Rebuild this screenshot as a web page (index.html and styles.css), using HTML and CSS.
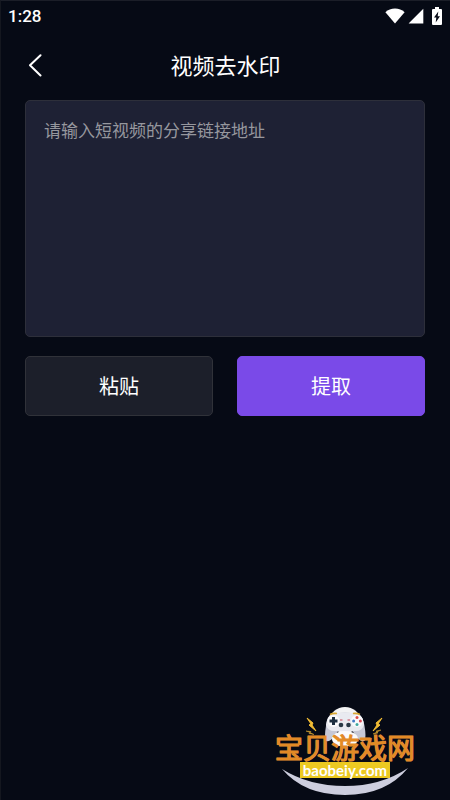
FILE: index.html
```html
<!DOCTYPE html>
<html lang="zh-CN">

<head>
    <meta charset="UTF-8">
    <meta name="viewport" content="width=device-width, initial-scale=1.0">
    <title>视频去水印</title>
    <link rel="stylesheet" href="styles.css">
</head>

<body>
    <div class="status_bar">
        <span class="time">1:28</span>
        <div class="status_icons">
            <svg width="20" height="16" viewBox="0 0 20 16">
                <path d="M10 15.600L.4 4.300C3 1.900 6.300 .6 10 .6s7 1.300 9.600 3.700z" fill="#fff" />
            </svg>
            <svg width="16" height="16" viewBox="0 0 16 16">
                <path d="M15.300 .8v14.700H.6z" fill="#fff" />
            </svg>
            <svg width="10" height="18" viewBox="0 0 10 18">
                <path d="M3 0h4v2h2q1 0 1 1v14q0 1-1 1H1q-1 0-1-1V3q0-1 1-1h2z" fill="#fff" />
                <path d="M6.300 4.500L2 10.500h2.300L3.700 15.500 8 9.300H5.700z" fill="#080b17" />
            </svg>
        </div>
    </div>

    <header class="nav">
        <button type="button" class="back" aria-label="返回">
            <svg width="16" height="24" viewBox="0 0 16 24">
                <path d="M13.500 1.200L3 11.200l10.500 10.300" fill="none" stroke="#fff" stroke-width="2" stroke-linecap="round" stroke-linejoin="round" />
            </svg>
        </button>
        <h1>视频去水印</h1>
    </header>

    <main class="content">
        <textarea class="link_input" aria-label="分享链接" placeholder="请输入短视频的分享链接地址"></textarea>
        <div class="btns">
            <button type="button" class="btn">粘贴</button>
            <button type="button" class="btn btn_main">提取</button>
        </div>
    </main>

    <div class="mark">
        <svg class="mark_pad" width="80" height="40" viewBox="0 0 80 40">
            <!-- head -->
            <ellipse cx="40" cy="14" rx="15" ry="13" fill="#f3f3f4" />
            <!-- gamepad -->
            <path d="M27 8q13-3 26 0 5 2 6.500 12 2 11 0 15-4 1-8-4l-4-6H33l-4 6q-4 5-8 4-2-4 0-15Q22.500 10 27 8z" fill="#c6c8d6" />
            <path d="M27 8q13-3 26 0 5 2 6 11-2 6-8 6H29q-6 0-8-6 1-9 6-11z" fill="#e9eaf0" />
            <ellipse cx="40" cy="33" rx="13" ry="8" fill="#fbfbfb" />
            <circle cx="28.500" cy="15" r="6" fill="#fafafc" />
            <circle cx="52" cy="15" r="6" fill="#fafafc" />
            <path d="M25 8.500q3-1.500 7-1M48 7.500q4-.5 7 1" fill="none" stroke="#d9a832" stroke-width="1.500" />
            <path d="M28.500 11v8M24.500 15h8" stroke="#1d2f40" stroke-width="3" />
            <circle cx="52" cy="11.600" r="1.500" fill="#db4b47" />
            <circle cx="52" cy="18.400" r="1.500" fill="#41a89f" />
            <circle cx="48.600" cy="15" r="1.500" fill="#437bc5" />
            <circle cx="55.400" cy="15" r="1.500" fill="#d94c57" />
            <path d="M35 14h2.500M42.500 14H45" stroke="#c94757" stroke-width="1.200" />
            <circle cx="36" cy="19" r="2.300" fill="#293946" />
            <circle cx="43.500" cy="19" r="2.300" fill="#293946" />
            <!-- sparks -->
            <path d="M2 12l6 5-1 2 4 6-7-6 2-1zM77 12l-6 5 1 2-4 6 7-6-2-1z" fill="#f2bd34" stroke="#f2bd34" stroke-width="1" />
            <path d="M1 25l5 .5-1 1 4 2-5-1 1-1zM76 24l-5 1 1 1-4 2 5-1-1-1z" fill="#d3a033" stroke="#d3a033" stroke-width=".5" />
        </svg>
        <div class="mark_name">宝贝游戏网</div>
        <a class="mark_url" href="#">baobeiy.com</a>
        <svg class="mark_arc" width="128" height="28" viewBox="0 0 128 28">
            <path d="M1 1Q28 18 64 18T127 0Q105 27 64 27T1 1z" fill="#cdcede" />
        </svg>
    </div>
</body>

</html>
```
FILE: styles.css
```css
* {
    box-sizing: border-box;
}

body {
    margin: 0;
    min-height: 100vh;
    position: relative;
    background-color: #060a15;
    border-top: 1px solid #1b1e28;
    border-left: 1px solid #14171f;
    color: white;
    font-family: "Noto Sans CJK SC", sans-serif;
}

svg {
    display: block;
}

button {
    font-family: inherit;
    color: white;
    cursor: pointer;
}

.status_bar {
    display: flex;
    justify-content: space-between;
    align-items: center;
    height: 30px;
    padding: 0 8px 0 7px;
}

.time {
    font: 500 17px/20px Roboto, sans-serif;
}

.status_icons {
    display: flex;
    align-items: center;
    gap: 3px;
}

.status_icons svg:last-child {
    margin-left: 5px;
}

.nav {
    display: grid;
    grid-template-columns: 40px 1fr 40px;
    align-items: center;
    height: 69px;
    padding: 0 14px;
}

.back {
    display: flex;
    justify-content: center;
    padding: 8px 0;
    border: none;
    background: none;
}

.nav h1 {
    margin: 0 0 4px;
    text-align: center;
    font-size: 22px;
    line-height: 32px;
    font-weight: 400;
}

.content {
    padding: 0 25px 0 24px;
}

.link_input {
    display: block;
    width: 100%;
    height: 237px;
    padding: 17px 18px;
    border: 1px solid #2d2f3a;
    border-radius: 5px;
    background-color: #1e2134;
    color: white;
    font-family: inherit;
    font-size: 17px;
    line-height: 24px;
    resize: none;
    outline: none;
}

.link_input::placeholder {
    color: #96979e;
}

.btns {
    display: grid;
    grid-template-columns: 1fr 1fr;
    gap: 24px;
    margin-top: 19px;
}

.btn {
    height: 60px;
    padding: 0;
    border: 1px solid #303239;
    border-radius: 5px;
    background-color: #1c1f2a;
    font-size: 20px;
    line-height: 30px;
}

.btn_main {
    border-color: #7a4ae6;
    background-color: #7a4ae8;
}

/* site mark over the bottom right corner */
.mark {
    position: absolute;
    right: 35px;
    bottom: 4px;
    display: flex;
    flex-direction: column;
    align-items: center;
}

.mark_name {
    margin-top: -12px;
    padding-bottom: 2px;
    font-size: 28px;
    line-height: 26px;
    font-weight: 400;
    color: #e38a25;
    -webkit-text-stroke: 1px #e38a25;
    text-shadow: 0 0 1px #f0d9bd;
}

.mark_url {
    position: relative;
    z-index: 1;
    padding: 0 3px;
    background-color: #ecc921;
    color: white;
    font: 700 15px/16px Lato, sans-serif;
    text-decoration: none;
}

.mark_arc {
    margin-top: -10px;
}
```
